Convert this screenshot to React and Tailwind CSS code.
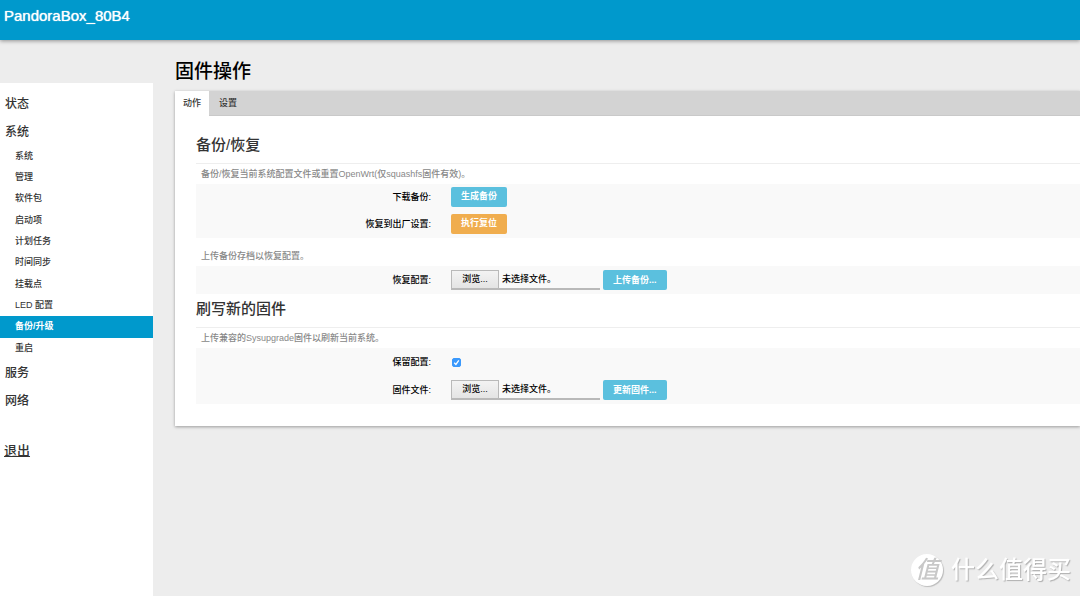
import React, { useState } from 'react';

const systemItems = [
  '系统',
  '管理',
  '软件包',
  '启动项',
  '计划任务',
  '时间同步',
  '挂载点',
  'LED 配置',
  '备份/升级',
  '重启',
];

const buttonColors = {
  info: 'bg-[#5bc0de]',
  warning: 'bg-[#f0ad4e]',
};

const ActionButton = ({ color = 'info', children }) => (
  <button
    type="button"
    className={`h-5 rounded-xs px-[10px] pt-px text-[9px] font-bold text-white ${buttonColors[color]}`}
  >
    {children}
  </button>
);

const MenuLink = ({ children }) => (
  <a href="#" className="flex h-7 items-center pl-[5px] text-[12px] font-medium">
    {children}
  </a>
);

const Sidebar = () => {
  const [active, setActive] = useState('备份/升级');

  return (
    <nav className="mt-[43px] w-[153px] shrink-0 bg-white pt-[7px] text-[#333333]">
      <MenuLink>状态</MenuLink>
      <MenuLink>系统</MenuLink>
      <ul className="grid h-[213px] auto-rows-fr text-[9px]">
        {systemItems.map((item) => (
          <li key={item}>
            <a
              href="#"
              onClick={() => setActive(item)}
              className={`flex h-full items-center pl-[15px] ${
                item === active ? 'bg-[#0099cc] font-bold text-white' : 'font-medium'
              }`}
            >
              {item}
            </a>
          </li>
        ))}
      </ul>
      <MenuLink>服务</MenuLink>
      <MenuLink>网络</MenuLink>
      <a href="#" className="mt-[26px] block pl-1 text-[13px] font-medium underline">
        退出
      </a>
    </nav>
  );
};

const Section = ({ title, children }) => (
  <section>
    <h2 className="flex h-[34px] items-center border-b border-[#eeeeee] pb-[3px] text-[15px] font-medium text-[#333333]">
      {title}
    </h2>
    {children}
  </section>
);

const Description = ({ children }) => (
  <p className="flex h-5 items-center pt-0.5 pl-[5px] text-[9px] font-medium text-[#888888]">
    {children}
  </p>
);

// Fila de formulario: etiqueta a la derecha de su columna y control al lado
const Row = ({ label, htmlFor, compact, children }) => (
  <div className={`flex items-center ${compact ? 'h-[27px] pb-0.5' : 'h-7'}`}>
    {htmlFor ? (
      <label htmlFor={htmlFor} className="w-[235px] shrink-0 pt-0.5 text-right">
        {label}
      </label>
    ) : (
      <span className="w-[235px] shrink-0 pt-0.5 text-right">{label}</span>
    )}
    <div className="ml-5 flex items-center gap-[3px]">{children}</div>
  </div>
);

const FilePicker = ({ id }) => {
  const [fileName, setFileName] = useState('');

  return (
    <label className="relative flex h-5 w-[149px] items-stretch border-b-2 border-[#b9b9b9]">
      <input
        id={id}
        type="file"
        className="sr-only"
        onChange={(e) => setFileName(e.target.files[0]?.name || '')}
      />
      <span className="flex w-12 items-center justify-center border border-b-0 border-[#b9b9b9] bg-linear-to-b from-[#f3f3f3] to-[#e4e4e4]">
        浏览...
      </span>
      <span className="flex items-center pt-px pl-[3px]">{fileName || '未选择文件。'}</span>
    </label>
  );
};

const Checkbox = ({ id, checked, onChange }) => (
  <span className="relative ml-px size-[9px]">
    <input
      id={id}
      type="checkbox"
      checked={checked}
      onChange={onChange}
      className="block size-[9px] appearance-none rounded-xs border border-[#b9b9b9] bg-white checked:border-[#3b99fc] checked:bg-[#3b99fc]"
    />
    {checked && (
      <svg viewBox="0 0 9 9" className="pointer-events-none absolute inset-0 size-[9px]">
        <path d="M2.2 4.8 L3.9 6.5 L6.8 2.4" fill="none" stroke="#fff" strokeWidth="1.3" />
      </svg>
    )}
  </span>
);

const Watermark = () => (
  <div className="pointer-events-none fixed right-[9px] bottom-[10px] flex items-center gap-2 text-white">
    <span className="flex size-8 items-center justify-center rounded-full bg-white text-[24px] leading-none font-medium text-[#c8c8c8] italic shadow-[1px_1px_1px_#bbbbbb]">
      值
    </span>
    <span className="text-[24px] leading-8 font-medium [text-shadow:1px_1px_1px_#b0b0b0]">
      什么值得买
    </span>
  </div>
);

export default function App() {
  const [keepSettings, setKeepSettings] = useState(true);

  return (
    <div
      lang="zh-CN"
      className="flex min-h-screen flex-col overflow-x-hidden bg-[#ededed] font-['Liberation_Sans','Noto_Sans_CJK_SC',sans-serif]"
    >
      <header className="relative h-10 bg-[#0099cc] px-1 pt-1 shadow-[0_1px_4px_rgba(0,0,0,0.4)]">
        <a href="#" className="text-[15px] leading-6 text-white [text-shadow:0_0_1px_#ffffff]">
          PandoraBox_80B4
        </a>
      </header>

      <div className="flex grow">
        <Sidebar />

        <main className="ml-[22px] min-w-0 grow">
          <h1 className="mt-[18px] text-[19px] leading-7 font-medium text-black">固件操作</h1>

          <div className="mt-[5px] bg-white shadow-[0_1px_3px_rgba(0,0,0,0.35)]">
            {/* Pestañas */}
            <div className="flex h-[25px] border-b border-[#c9c9c9] bg-[#d3d3d3] text-[9px] font-medium text-[#333333]">
              <a href="#" className="-mb-px flex w-[34px] items-center justify-center bg-white">
                动作
              </a>
              <a href="#" className="-mb-px flex items-center px-[10px]">
                设置
              </a>
            </div>

            <div className="pt-[14px] pb-[22px] pl-[21px] text-[9px] font-medium text-black">
              <Section title="备份/恢复">
                <Description>备份/恢复当前系统配置文件或重置OpenWrt(仅squashfs固件有效)。</Description>
                <div className="bg-[#f9f9f9]">
                  <Row label="下载备份:" compact>
                    <ActionButton>生成备份</ActionButton>
                  </Row>
                  <Row label="恢复到出厂设置:" compact>
                    <ActionButton color="warning">执行复位</ActionButton>
                  </Row>
                </div>
                <div className="mt-2">
                  <Description>上传备份存档以恢复配置。</Description>
                </div>
                <div className="bg-[#f9f9f9]">
                  <Row label="恢复配置:" htmlFor="archive">
                    <FilePicker id="archive" />
                    <ActionButton>上传备份...</ActionButton>
                  </Row>
                </div>
              </Section>

              <Section title="刷写新的固件">
                <Description>上传兼容的Sysupgrade固件以刷新当前系统。</Description>
                <div className="bg-[#f9f9f9]">
                  <Row label="保留配置:" htmlFor="keep">
                    <Checkbox
                      id="keep"
                      checked={keepSettings}
                      onChange={(e) => setKeepSettings(e.target.checked)}
                    />
                  </Row>
                  <Row label="固件文件:" htmlFor="image">
                    <FilePicker id="image" />
                    <ActionButton>更新固件...</ActionButton>
                  </Row>
                </div>
              </Section>
            </div>
          </div>
        </main>
      </div>

      <Watermark />
    </div>
  );
}
